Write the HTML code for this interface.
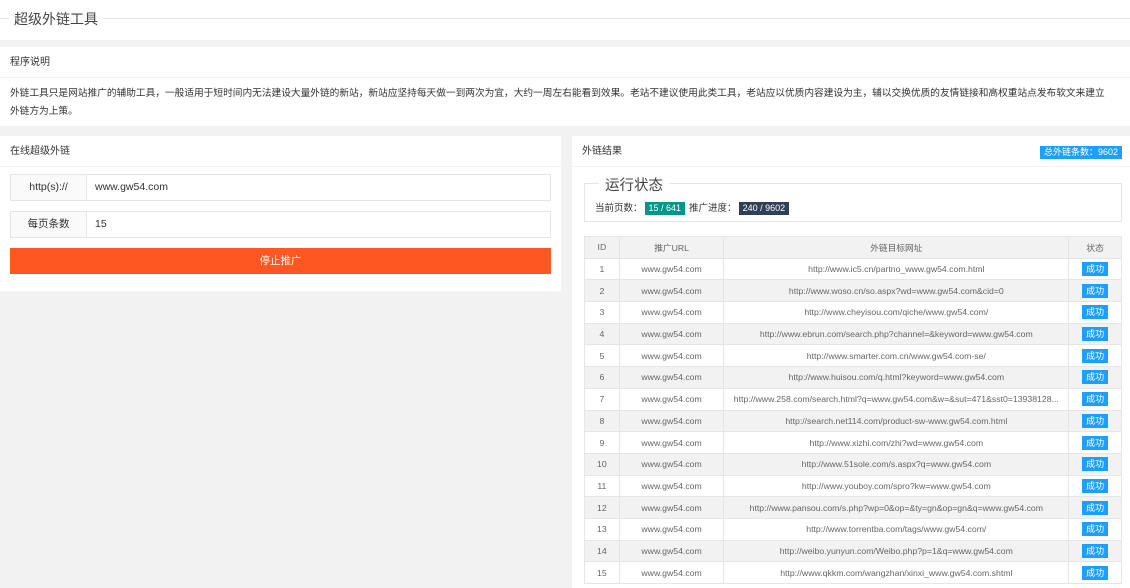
<!DOCTYPE html>
<html><head><meta charset="utf-8"><style>
*{box-sizing:border-box;margin:0;padding:0}
body{width:1130px;height:588px;overflow:hidden;background:#f2f2f2;font-family:"Liberation Sans","Noto Sans CJK SC",sans-serif;color:#333;font-size:11px}
.top{position:absolute;left:0;top:0;width:1130px;height:40px;background:#fff}
.top .line{position:absolute;left:0;right:0;top:18px;border-top:1px solid #e6e6e6}
.top .t{position:absolute;left:9px;top:9px;padding:0 5px;background:#fff;font-size:14px;color:#444}
.card{position:absolute;background:#fff}
.hd{height:31px;line-height:31px;padding-left:10px;border-bottom:1px solid #f2f2f2;font-size:10px;color:#333}
.desc{padding:7px 10px;line-height:18px;white-space:nowrap;font-size:9.7px}
.row{position:absolute;left:10px;width:541px;height:27px;border:1px solid #e6e6e6;font-size:10.5px}
.row .l{position:absolute;left:0;top:0;width:76px;height:25px;line-height:25px;text-align:center;background:#fafafa;border-right:1px solid #e6e6e6}
.row .v{position:absolute;left:84px;top:0;line-height:25px}
.btn{position:absolute;left:10px;top:112px;width:541px;height:26px;background:#ff5722;color:#fff;text-align:center;line-height:26px;font-size:10.5px}
.badge{position:absolute;right:8px;top:10px;background:#1e9fff;color:#fff;font-size:9px;padding:0 4px;height:13px;line-height:13px}
.fs{position:absolute;left:12px;top:47px;width:538px;height:39px;border:1px solid #e6e6e6}
.fs .lg{position:absolute;left:14px;top:-10px;background:#fff;padding:0 6px;font-size:14.5px;color:#444}
.fs .st{position:absolute;left:10px;top:16px;font-size:9.5px}
.tag{display:inline-block;color:#fff;padding:0 4px;height:13px;line-height:13px;font-size:9px;margin:0 4px 0 2px}
table{position:absolute;left:12px;top:100px;width:538px;border-collapse:collapse;font-size:8.7px;color:#666}
td,th{border:1px solid #e6e6e6;height:21.7px;text-align:center;font-weight:normal;white-space:nowrap;overflow:hidden}
th{background:#f2f2f2}
tbody tr:nth-child(even){background:#f2f2f2}
.ok{display:inline-block;background:#1e9fff;color:#fff;font-size:9px;padding:0 4px;height:14px;line-height:14px}
</style></head><body>
<div class="top"><div class="line"></div><div class="t">超级外链工具</div></div>
<div class="card" style="left:0;top:47px;width:1130px;height:79px">
<div class="hd">程序说明</div>
<div class="desc">外链工具只是网站推广的辅助工具，一般适用于短时间内无法建设大量外链的新站，新站应坚持每天做一到两次为宜，大约一周左右能看到效果。老站不建议使用此类工具，老站应以优质内容建设为主，辅以交换优质的友情链接和高权重站点发布软文来建立<br>外链方为上策。</div>
</div>
<div class="card" style="left:0;top:136px;width:561px;height:155px">
<div class="hd">在线超级外链</div>
<div class="row" style="top:38px"><div class="l">http(s)://</div><div class="v">www.gw54.com</div></div>
<div class="row" style="top:75px"><div class="l">每页条数</div><div class="v">15</div></div>
<div class="btn">停止推广</div>
</div>
<div class="card" style="left:572px;top:136px;width:558px;height:452px">
<div class="hd">外链结果</div>
<div class="badge">总外链条数：9602</div>
<div class="fs"><div class="lg">运行状态</div><div class="st">当前页数：<span class="tag" style="background:#009688">15 / 641</span>推广进度：<span class="tag" style="background:#2f4056">240 / 9602</span></div></div>
<table>
<colgroup><col style="width:35px"><col style="width:105px"><col style="width:345px"><col style="width:53px"></colgroup>
<thead><tr><th>ID</th><th>推广URL</th><th>外链目标网址</th><th>状态</th></tr></thead>
<tbody>
<tr><td>1</td><td>www.gw54.com</td><td>http://www.ic5.cn/partno_www.gw54.com.html</td><td><span class="ok">成功</span></td></tr>
<tr><td>2</td><td>www.gw54.com</td><td>http://www.woso.cn/so.aspx?wd=www.gw54.com&amp;cid=0</td><td><span class="ok">成功</span></td></tr>
<tr><td>3</td><td>www.gw54.com</td><td>http://www.cheyisou.com/qiche/www.gw54.com/</td><td><span class="ok">成功</span></td></tr>
<tr><td>4</td><td>www.gw54.com</td><td>http://www.ebrun.com/search.php?channel=&amp;keyword=www.gw54.com</td><td><span class="ok">成功</span></td></tr>
<tr><td>5</td><td>www.gw54.com</td><td>http://www.smarter.com.cn/www.gw54.com-se/</td><td><span class="ok">成功</span></td></tr>
<tr><td>6</td><td>www.gw54.com</td><td>http://www.huisou.com/q.html?keyword=www.gw54.com</td><td><span class="ok">成功</span></td></tr>
<tr><td>7</td><td>www.gw54.com</td><td>http://www.258.com/search.html?q=www.gw54.com&amp;w=&amp;sut=471&amp;sst0=13938128...</td><td><span class="ok">成功</span></td></tr>
<tr><td>8</td><td>www.gw54.com</td><td>http://search.net114.com/product-sw-www.gw54.com.html</td><td><span class="ok">成功</span></td></tr>
<tr><td>9</td><td>www.gw54.com</td><td>http://www.xizhi.com/zhi?wd=www.gw54.com</td><td><span class="ok">成功</span></td></tr>
<tr><td>10</td><td>www.gw54.com</td><td>http://www.51sole.com/s.aspx?q=www.gw54.com</td><td><span class="ok">成功</span></td></tr>
<tr><td>11</td><td>www.gw54.com</td><td>http://www.youboy.com/spro?kw=www.gw54.com</td><td><span class="ok">成功</span></td></tr>
<tr><td>12</td><td>www.gw54.com</td><td>http://www.pansou.com/s.php?wp=0&amp;op=&amp;ty=gn&amp;op=gn&amp;q=www.gw54.com</td><td><span class="ok">成功</span></td></tr>
<tr><td>13</td><td>www.gw54.com</td><td>http://www.torrentba.com/tags/www.gw54.com/</td><td><span class="ok">成功</span></td></tr>
<tr><td>14</td><td>www.gw54.com</td><td>http://weibo.yunyun.com/Weibo.php?p=1&amp;q=www.gw54.com</td><td><span class="ok">成功</span></td></tr>
<tr><td>15</td><td>www.gw54.com</td><td>http://www.qkkm.com/wangzhan/xinxi_www.gw54.com.shtml</td><td><span class="ok">成功</span></td></tr>
</tbody></table>
</div>
</body></html>
